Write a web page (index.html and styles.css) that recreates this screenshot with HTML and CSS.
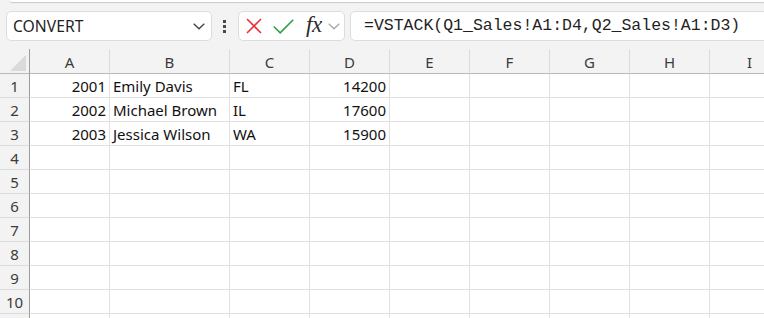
FILE: index.html
```html
<!DOCTYPE html>
<html>
<head>
<meta charset="utf-8">
<link rel="stylesheet" href="styles.css">
</head>
<body>
<div class="ribbon-edge"></div>
<div class="toolbar">
  <div class="namebox">
    <span class="name">CONVERT</span>
    <svg class="chev" width="12" height="7" viewBox="0 0 12 7"><path d="M0.7 0.7 L6 5.8 L11.3 0.7" fill="none" stroke="#424242" stroke-width="1.3"/></svg>
  </div>
  <div class="vdots"><span></span><span></span><span></span></div>
  <div class="fbuttons">
    <svg class="ico-x" width="16" height="16" viewBox="0 0 16 16"><path d="M1 1 L15 15 M15 1 L1 15" stroke="#e8353b" stroke-width="1.6" fill="none"/></svg>
    <svg class="ico-check" width="21" height="15" viewBox="0 0 21 15"><path d="M0.8 7.5 L7.2 13.8 L20.2 0.8" stroke="#2e9e4a" stroke-width="1.6" fill="none"/></svg>
    <span class="fx">fx</span>
    <svg class="chev2" width="12" height="7" viewBox="0 0 12 7"><path d="M0.7 0.7 L6 5.8 L11.3 0.7" fill="none" stroke="#a8a8a8" stroke-width="1.3"/></svg>
  </div>
  <div class="formula">=VSTACK(Q1_Sales!A1:D4,Q2_Sales!A1:D3)</div>
</div>
<div class="sheet">
  <div class="corner"><span class="tri"></span></div>
  <div class="ch">A</div><div class="ch">B</div><div class="ch">C</div><div class="ch">D</div><div class="ch">E</div><div class="ch">F</div><div class="ch">G</div><div class="ch">H</div><div class="ch">I</div>

  <div class="rh">1</div><div class="c num">2001</div><div class="c">Emily Davis</div><div class="c">FL</div><div class="c num">14200</div><div class="c"></div><div class="c"></div><div class="c"></div><div class="c"></div><div class="c"></div>
  <div class="rh">2</div><div class="c num">2002</div><div class="c">Michael Brown</div><div class="c">IL</div><div class="c num">17600</div><div class="c"></div><div class="c"></div><div class="c"></div><div class="c"></div><div class="c"></div>
  <div class="rh">3</div><div class="c num">2003</div><div class="c">Jessica Wilson</div><div class="c">WA</div><div class="c num">15900</div><div class="c"></div><div class="c"></div><div class="c"></div><div class="c"></div><div class="c"></div>
  <div class="rh">4</div><div class="c"></div><div class="c"></div><div class="c"></div><div class="c"></div><div class="c"></div><div class="c"></div><div class="c"></div><div class="c"></div><div class="c"></div>
  <div class="rh">5</div><div class="c"></div><div class="c"></div><div class="c"></div><div class="c"></div><div class="c"></div><div class="c"></div><div class="c"></div><div class="c"></div><div class="c"></div>
  <div class="rh">6</div><div class="c"></div><div class="c"></div><div class="c"></div><div class="c"></div><div class="c"></div><div class="c"></div><div class="c"></div><div class="c"></div><div class="c"></div>
  <div class="rh">7</div><div class="c"></div><div class="c"></div><div class="c"></div><div class="c"></div><div class="c"></div><div class="c"></div><div class="c"></div><div class="c"></div><div class="c"></div>
  <div class="rh">8</div><div class="c"></div><div class="c"></div><div class="c"></div><div class="c"></div><div class="c"></div><div class="c"></div><div class="c"></div><div class="c"></div><div class="c"></div>
  <div class="rh">9</div><div class="c"></div><div class="c"></div><div class="c"></div><div class="c"></div><div class="c"></div><div class="c"></div><div class="c"></div><div class="c"></div><div class="c"></div>
  <div class="rh">10</div><div class="c"></div><div class="c"></div><div class="c"></div><div class="c"></div><div class="c"></div><div class="c"></div><div class="c"></div><div class="c"></div><div class="c"></div>
  <div class="rh rh-last"></div><div class="c last"></div><div class="c last"></div><div class="c last"></div><div class="c last"></div><div class="c last"></div><div class="c last"></div><div class="c last"></div><div class="c last"></div><div class="c last"></div>
</div>
</body>
</html>
```

FILE: styles.css
```css
html, body {
  margin: 0;
  padding: 0;
  width: 764px;
  height: 318px;
  overflow: hidden;
  background: #f3f3f3;
  font-family: "Segoe UI", "Noto Sans", "Open Sans", sans-serif;
}

.ribbon-edge {
  height: 2px;
  margin-left: 10px;
  background: #ffffff;
  border-bottom-left-radius: 4px;
  box-shadow: 0 1px 1px rgba(0, 0, 0, 0.18);
}

.toolbar {
  display: flex;
  align-items: center;
  height: 30px;
  padding: 9px 0 0 6px;
  margin-bottom: 8px;
  overflow: hidden;
}

.namebox {
  box-sizing: border-box;
  flex: 0 0 206px;
  height: 30px;
  background: #fff;
  border: 1px solid #dcdcdc;
  border-radius: 5px;
  display: flex;
  align-items: center;
  padding: 0 6px 0 6px;
}

.name {
  flex: 1;
  font-size: 15.7px;
  color: #1f1f1f;
}

.vdots {
  flex: 0 0 25px;
  display: flex;
  flex-direction: column;
  align-items: center;
  gap: 2px;
  padding-right: 1px;
}

.vdots span {
  width: 3px;
  height: 3px;
  background: #4a4a4a;
}

.fbuttons {
  box-sizing: border-box;
  flex: 0 0 107px;
  height: 30px;
  background: #fff;
  border: 1px solid #dcdcdc;
  border-radius: 5px;
  display: flex;
  align-items: center;
  padding-left: 7px;
}

.ico-x {
  flex: 0 0 16px;
  margin-right: 11px;
}

.ico-check {
  flex: 0 0 21px;
  margin-right: 12px;
  margin-top: 1px;
}

.fx {
  font-family: "Liberation Serif", "DejaVu Serif", serif;
  font-style: italic;
  font-size: 23px;
  line-height: 26px;
  color: #2b2b2b;
  margin-right: 6px;
  margin-top: -3px;
  letter-spacing: -0.5px;
}

.chev2 {
  flex: 0 0 12px;
  margin-top: 1px;
}

.formula {
  box-sizing: border-box;
  margin-left: 5px;
  flex: 0 0 440px;
  height: 30px;
  background: #fff;
  border: 1px solid #dcdcdc;
  border-radius: 5px;
  padding-left: 13px;
  font-family: "Liberation Mono", "DejaVu Sans Mono", monospace;
  font-size: 16.5px;
  line-height: 28px;
  color: #1f1f1f;
  white-space: nowrap;
}

.sheet {
  display: grid;
  grid-template-columns: 30px 80px 120px repeat(7, 80px);
  grid-template-rows: 25px repeat(10, 24px) 6px;
  width: 764px;
  overflow: hidden;
  font-size: 15px;
}

.corner {
  box-sizing: border-box;
  border-right: 1px solid #9c9c9c;
  border-bottom: 1px solid #b8b8b8;
  position: relative;
}

.tri {
  position: absolute;
  right: 3px;
  bottom: 2px;
  width: 0;
  height: 0;
  border-left: 16px solid transparent;
  border-bottom: 16px solid #dadada;
}

.ch {
  box-sizing: border-box;
  border-right: 1px solid #dadada;
  border-bottom: 1px solid #b8b8b8;
  display: flex;
  align-items: center;
  justify-content: center;
  color: #3b3b3b;
  padding-top: 1px;
}

.rh {
  box-sizing: border-box;
  border-right: 1px solid #9c9c9c;
  border-bottom: 1px solid #dadada;
  display: flex;
  align-items: center;
  justify-content: center;
  color: #3b3b3b;
  padding-top: 1px;
}

.c {
  box-sizing: border-box;
  background: #fff;
  border-right: 1px solid #e0e0e0;
  border-bottom: 1px solid #e0e0e0;
  display: flex;
  align-items: center;
  padding: 1px 3px 0 3px;
  color: #111;
  white-space: nowrap;
  overflow: hidden;
}

.rh-last,
.last {
  border-bottom: none;
}

.num {
  justify-content: flex-end;
}
```
